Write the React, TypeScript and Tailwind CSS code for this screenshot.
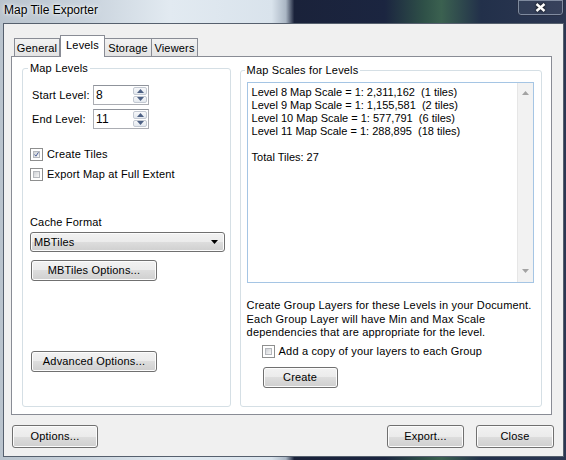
import type { ReactNode } from "react";

const btn =
  "flex items-center justify-center rounded-[3px] border border-[#707070] bg-[linear-gradient(#f2f2f2_0%,#ebebeb_50%,#dddddd_50%,#cfcfcf_100%)] shadow-[inset_0_0_0_1px_#fcfcfc] text-[11px] tracking-[0.17px] text-black";

function Check({ checked }: { checked?: boolean }) {
  return (
    <span className="flex h-[13px] w-[13px] shrink-0 items-center justify-center border border-[#8e8f8f] bg-white p-[2px]">
      <span className="flex h-full w-full items-center justify-center border border-[#b5b8bd] bg-[linear-gradient(135deg,#cfd2d6,#f7f7f7)]">
        {checked && (
          <svg width="9" height="9" viewBox="0 0 9 9" className="-mt-px">
            <path d="M1 4.5 L3.5 7.5 L8 0.5" stroke="#4a5f97" strokeWidth="1.8" fill="none" />
          </svg>
        )}
      </span>
    </span>
  );
}

function Spinner({ value }: { value: string }) {
  return (
    <div className="flex h-[20px] w-[56px] border border-[#abadb3] border-t-[#8f939b] bg-white">
      <span className="flex-1 pl-[2px] pt-[1px] text-[12px] leading-[17px]">{value}</span>
      <div className="flex w-[16px] flex-col gap-px p-px">
        <span className="flex flex-1 items-center justify-center rounded-[2px] border border-[#c3c9d2] bg-[linear-gradient(#f7f8fa,#e3e8ee)]">
          <svg width="7" height="4" viewBox="0 0 7 4">
            <path d="M0 4 L3.5 0 L7 4Z" fill="#4d6185" />
          </svg>
        </span>
        <span className="flex flex-1 items-center justify-center rounded-[2px] border border-[#c3c9d2] bg-[linear-gradient(#f7f8fa,#e3e8ee)]">
          <svg width="7" height="4" viewBox="0 0 7 4">
            <path d="M0 0 L3.5 4 L7 0Z" fill="#4d6185" />
          </svg>
        </span>
      </div>
    </div>
  );
}

function Group({ title, className, children }: { title: string; className: string; children: ReactNode }) {
  return (
    <fieldset className={`rounded-[3px] border border-[#d5dfe5] ${className}`}>
      <legend className="-ml-[2px] px-[2px] text-[11px] leading-[13px] tracking-[0.17px]">{title}</legend>
      {children}
    </fieldset>
  );
}

const tabs = [
  { name: "General", w: "w-[46px]" },
  { name: "Levels", w: "w-[45px]", active: true },
  { name: "Storage", w: "w-[48px]" },
  { name: "Viewers", w: "w-[47px]" },
];

const scales = [
  "Level 8 Map Scale = 1: 2,311,162  (1 tiles)",
  "Level 9 Map Scale = 1: 1,155,581  (2 tiles)",
  "Level 10 Map Scale = 1: 577,791  (6 tiles)",
  "Level 11 Map Scale = 1: 288,895  (18 tiles)",
];

export default function App() {
  return (
    <div className="flex h-[460px] w-[566px] flex-col overflow-hidden bg-[linear-gradient(90deg,#b9c3cd_0%,#c8d2dc_15%,#e2eaf1_30%,#d9e3ec_48%,#aab6c4_50.5%,#1a223a_52%,#1b2540_68%,#2f5148_75%,#3b6150_78%,#22304a_85%,#2c3752_100%)] font-['Liberation_Sans',Arial,sans-serif] text-black">
      {/* title bar */}
      <div className="flex h-[23px] shrink-0 items-start justify-between">
        <span className="pl-[4px] pt-[3px] text-[12px] leading-[15px] [text-shadow:0_0_6px_#fff,0_0_3px_#fff]">
          Map Tile Exporter
        </span>
        <div className="mr-[2px] -mt-px flex h-[17px] w-[47px] items-center justify-center rounded-b-[4px] border border-[#283046] bg-[rgba(255,255,255,0.06)] shadow-[inset_0_0_0_1px_rgba(220,230,245,0.45)]">
          <svg width="11" height="9" viewBox="0 0 11 9" className="drop-shadow-[0_0_1px_#000]">
            <path d="M1.5 1 L9.5 8 M9.5 1 L1.5 8" stroke="#fff" strokeWidth="2.4" />
          </svg>
        </div>
      </div>

      {/* client area */}
      <div className="ml-[3px] mb-[3px] flex w-[561px] flex-1 flex-col border border-[#56606e] bg-[#f0f0f0] pl-[7px] pr-[11px] pt-[11px]">
        {/* tab headers */}
        <div className="relative z-10 -mb-px flex h-[22px] items-end pl-[3px] tracking-[0.17px]">
          {tabs.map((t) =>
            t.active ? (
              <div
                key={t.name}
                className={`${t.w} flex h-[22px] justify-center border border-b-0 border-[#898c95] bg-white pt-[3px] text-[11px] leading-[13px]`}
              >
                {t.name}
              </div>
            ) : (
              <div
                key={t.name}
                className={`${t.w} -ml-px flex h-[19px] justify-center border border-[#898c95] bg-[linear-gradient(#f2f2f2,#e3e3e3)] pt-[3px] text-[11px] leading-[13px] first:ml-0`}
              >
                {t.name}
              </div>
            )
          )}
        </div>

        {/* tab page */}
        <div className="flex h-[359px] gap-[9px] border border-[#898c95] bg-white pb-[7px] pl-[10px] pr-[9px] pt-[5px] tracking-[0.17px]">
          <Group title="Map Levels" className="flex w-[209px] flex-col pl-[7px] pr-[5px]">
            <div className="mt-[10px] flex items-center pl-[2px] text-[11px]">
              <span className="w-[61px]">Start Level:</span>
              <Spinner value="8" />
            </div>
            <div className="mt-[4px] flex items-center pl-[2px] text-[11px]">
              <span className="w-[61px]">End Level:</span>
              <Spinner value="11" />
            </div>
            <label className="mt-[19px] flex items-center gap-[4px] text-[11px] leading-[13px]">
              <Check checked />
              Create Tiles
            </label>
            <label className="mt-[7px] flex items-center gap-[4px] text-[11px] leading-[13px]">
              <Check />
              Export Map at Full Extent
            </label>
            <span className="mt-[35px] text-[11px] leading-[13px]">Cache Format</span>
            <div className="mt-[3px] flex h-[20px] items-center justify-between rounded-[3px] border border-[#707070] bg-[linear-gradient(#f2f2f2_0%,#ebebeb_50%,#dddddd_50%,#cfcfcf_100%)] pl-[3px] pr-[6px] text-[11px] shadow-[inset_0_0_0_1px_#fcfcfc]">
              <span>MBTiles</span>
              <svg width="7" height="4" viewBox="0 0 7 4">
                <path d="M0 0 L3.5 4 L7 0Z" fill="#000" />
              </svg>
            </div>
            <button className={`${btn} ml-px mt-[8px] h-[21px] w-[126px]`}>MBTiles Options...</button>
            <button
              className={`${btn} ml-px mt-[70px] h-[21px] w-[126px] border-[#3c7fb1] shadow-[inset_0_0_0_1px_#a6e0f8]`}
            >
              Advanced Options...
            </button>
          </Group>

          <Group title="Map Scales for Levels" className="mt-[2px] flex w-[303px] flex-col pl-[6px] pr-[7px]">
            <div className="mt-[5px] flex h-[201px] border border-[#a5c5e4] bg-white tracking-normal">
              <div className="flex-1 whitespace-pre pl-[4px] pt-[3px] text-[11px] leading-[13px]">
                {scales.map((s) => (
                  <div key={s}>{s}</div>
                ))}
                <div className="mt-[13px]">Total Tiles: 27</div>
              </div>
              <div className="flex w-[16px] flex-col items-center justify-between border-l border-[#e6e6e6] bg-[#f2f2f2] pb-[9px] pt-[8px]">
                <svg width="7" height="4" viewBox="0 0 7 4">
                  <path d="M0 4 L3.5 0 L7 4Z" fill="#a3a3a3" />
                </svg>
                <svg width="7" height="4" viewBox="0 0 7 4">
                  <path d="M0 0 L3.5 4 L7 0Z" fill="#a3a3a3" />
                </svg>
              </div>
            </div>
            <p className="mt-[16px] text-[11px] leading-[13.5px]">
              Create Group Layers for these Levels in your Document.
              <br />
              Each Group Layer will have Min and Max Scale
              <br />
              dependencies that are appropriate for the level.
            </p>
            <label className="ml-[15px] mt-[5px] flex items-center gap-[4px] text-[11px] leading-[13px]">
              <Check />
              Add a copy of your layers to each Group
            </label>
            <button className={`${btn} ml-[16px] mt-[9px] h-[21px] w-[75px]`}>Create</button>
          </Group>
        </div>

        {/* bottom buttons */}
        <div className="mt-[10px] flex items-center pl-px">
          <button className={`${btn} h-[23px] w-[86px]`}>Options...</button>
          <div className="flex-1" />
          <button className={`${btn} h-[23px] w-[77px]`}>Export...</button>
          <button className={`${btn} ml-[12px] -mr-[2px] h-[23px] w-[78px]`}>Close</button>
        </div>
      </div>
    </div>
  );
}
